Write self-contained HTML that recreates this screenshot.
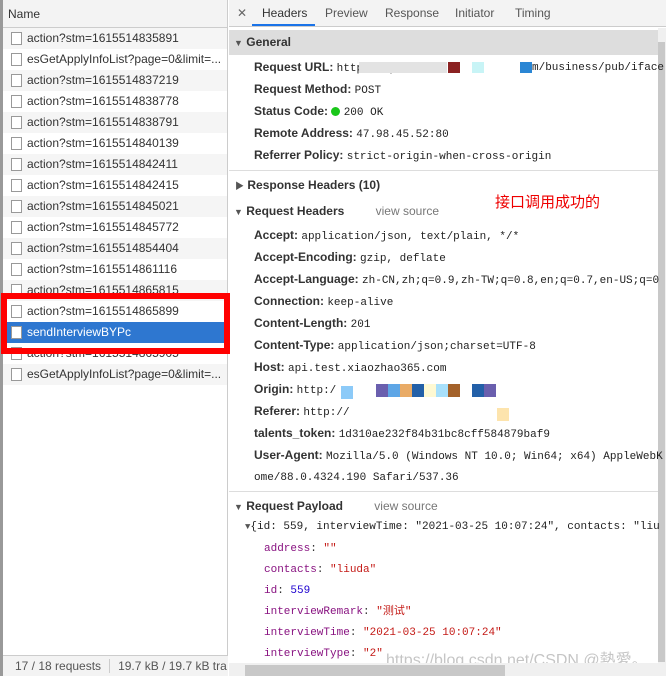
<!DOCTYPE html>
<html><head><meta charset="utf-8"><style>
*{box-sizing:border-box;margin:0;padding:0}
body{width:666px;height:676px;overflow:hidden;background:#fff;font-family:"Liberation Sans","Noto Sans CJK SC",sans-serif;font-size:12px;color:#333;position:relative}
.left{position:absolute;left:0;top:0;width:228px;height:676px;border-left:3px solid #999;border-right:1px solid #ccc;background:#fff}
.lh{height:28px;line-height:28px;padding-left:5px;border-bottom:1px solid #ccc;background:#f3f3f3;color:#333}
.row{height:21px;line-height:21px;position:relative;padding-left:24px;white-space:nowrap;overflow:hidden;color:#333}
.row:nth-child(even){background:#f5f5f5}
.row i{position:absolute;left:8px;top:4px;width:11px;height:13px;border:1px solid #999;background:#fff}
.row.sel{background:#2e77d0!important;color:#fff}
.foot{position:absolute;left:0;bottom:0;width:225px;height:21px;border-top:1px solid #ccc;background:#f3f3f3;line-height:21px;color:#555;white-space:nowrap;overflow:hidden}
.right{position:absolute;left:229px;top:0;width:437px;height:676px}
.tabs{height:27px;border-bottom:1px solid #ccc;background:#f3f3f3;position:relative;white-space:nowrap}
.tabs span{position:absolute;top:6px;color:#555}
.sec{position:absolute;left:0;width:429px;font-weight:bold;color:#333}
.k{position:absolute;left:25px;white-space:nowrap;font-weight:bold;color:#333}
.k b{font-weight:normal;font-family:"Liberation Mono",monospace;font-size:11px;color:#222}
.m{font-family:"Liberation Mono","Noto Sans CJK SC",monospace;font-size:11px;white-space:nowrap;position:absolute;line-height:14px;height:14px}
.p{color:#881280}.s{color:#c41a16}.n{color:#1c00cf}
.blk{position:absolute;height:11px}
.tri{font-size:9px;color:#555}
</style></head><body>
<div class="left">
<div class="lh">Name</div>
<div class="row"><i></i>action?stm=1615514835891</div>
<div class="row"><i></i>esGetApplyInfoList?page=0&amp;limit=...</div>
<div class="row"><i></i>action?stm=1615514837219</div>
<div class="row"><i></i>action?stm=1615514838778</div>
<div class="row"><i></i>action?stm=1615514838791</div>
<div class="row"><i></i>action?stm=1615514840139</div>
<div class="row"><i></i>action?stm=1615514842411</div>
<div class="row"><i></i>action?stm=1615514842415</div>
<div class="row"><i></i>action?stm=1615514845021</div>
<div class="row"><i></i>action?stm=1615514845772</div>
<div class="row"><i></i>action?stm=1615514854404</div>
<div class="row"><i></i>action?stm=1615514861116</div>
<div class="row"><i></i>action?stm=1615514865815</div>
<div class="row" style="background:#fff"><i></i>action?stm=1615514865899</div>
<div class="row sel"><i></i>sendInterviewBYPc</div>
<div class="row"><i></i>action?stm=1615514865905</div>
<div class="row"><i></i>esGetApplyInfoList?page=0&amp;limit=...</div>
<div class="foot"><span style="padding-left:12px">17 / 18 requests</span><span style="border-left:1px solid #ccc;margin-left:8px;padding-left:8px">19.7 kB / 19.7 kB tra</span></div>
</div>
<div style="position:absolute;left:1px;top:293px;width:229px;height:61px;border:6px solid #f00"></div>
<div class="right">
<div class="tabs">
<span style="left:8px;color:#666">✕</span>
<span style="left:33px;color:#333">Headers</span>
<div style="position:absolute;left:23px;top:24px;width:63px;height:2px;background:#1a73e8"></div>
<span style="left:96px">Preview</span><span style="left:156px">Response</span><span style="left:226px">Initiator</span><span style="left:286px">Timing</span>
</div>
<div style="position:absolute;left:429px;top:28px;width:8px;height:635px;background:#f0f0f0"><div style="margin-top:14px;height:620px;background:#c8c8c8;width:7px"></div></div>
<div class="sec" style="top:30px;height:25px;line-height:25px;background:#ddd;padding-left:5px"><span class="tri">▼</span> General</div>
<div class="k" style="top:60px">Request URL: <b>http://ap</b></div>
<div class="blk" style="left:130px;top:62px;width:88px;background:#e3e3e3"></div>
<div class="blk" style="left:219px;top:62px;width:12px;background:#8b2222"></div>
<div class="blk" style="left:243px;top:62px;width:12px;background:#c8f4f6"></div>
<div class="blk" style="left:291px;top:62px;width:12px;background:#2a86d4"></div>
<div class="m" style="left:303px;top:61px;color:#222">m/business/pub/iface</div>
<div class="k" style="top:82px">Request Method: <b>POST</b></div>
<div class="k" style="top:104px">Status Code: <span style="display:inline-block;width:9px;height:9px;border-radius:50%;background:#1ac71a;vertical-align:-1px"></span> <b>200 OK</b></div>
<div class="k" style="top:126px">Remote Address: <b>47.98.45.52:80</b></div>
<div class="k" style="top:148px">Referrer Policy: <b>strict-origin-when-cross-origin</b></div>
<div style="position:absolute;left:0;top:170px;width:429px;height:1px;background:#ddd"></div>
<div class="sec" style="top:178px;padding-left:6px"><span class="tri">▶</span> Response Headers (10)</div>
<div style="position:absolute;left:266px;top:191px;color:#e00;font-size:15px;font-family:'Noto Sans CJK SC',sans-serif">接口调用成功的</div>
<div class="sec" style="top:204px;padding-left:5px"><span class="tri">▼</span> Request Headers <span style="font-weight:normal;color:#777;margin-left:28px">view source</span></div>
<div class="k" style="top:228px">Accept: <b>application/json, text/plain, */*</b></div>
<div class="k" style="top:250px">Accept-Encoding: <b>gzip, deflate</b></div>
<div class="k" style="top:272px">Accept-Language: <b>zh-CN,zh;q=0.9,zh-TW;q=0.8,en;q=0.7,en-US;q=0</b></div>
<div class="k" style="top:294px">Connection: <b>keep-alive</b></div>
<div class="k" style="top:316px">Content-Length: <b>201</b></div>
<div class="k" style="top:338px">Content-Type: <b>application/json;charset=UTF-8</b></div>
<div class="k" style="top:360px">Host: <b>api.test.xiaozhao365.com</b></div>
<div class="k" style="top:382px">Origin: <b>http:/</b></div>
<div class="blk" style="left:112px;top:386px;width:12px;height:13px;background:#8ccaf8"></div>
<div class="blk" style="left:147px;top:384px;width:12px;height:13px;background:#6a5fae"></div>
<div class="blk" style="left:159px;top:384px;width:12px;height:13px;background:#5ea6e6"></div>
<div class="blk" style="left:171px;top:384px;width:12px;height:13px;background:#e9ab66"></div>
<div class="blk" style="left:183px;top:384px;width:12px;height:13px;background:#2360a8"></div>
<div class="blk" style="left:195px;top:384px;width:12px;height:13px;background:#fef9d3"></div>
<div class="blk" style="left:207px;top:384px;width:12px;height:13px;background:#a8e0fb"></div>
<div class="blk" style="left:219px;top:384px;width:12px;height:13px;background:#a4622a"></div>
<div class="blk" style="left:243px;top:384px;width:12px;height:13px;background:#2360a8"></div>
<div class="blk" style="left:255px;top:384px;width:12px;height:13px;background:#6a5fae"></div>
<div class="k" style="top:404px">Referer: <b>http://</b></div>
<div class="blk" style="left:268px;top:408px;width:12px;height:13px;background:#fde4ad"></div>
<div class="k" style="top:426px">talents_token: <b>1d310ae232f84b31bc8cff584879baf9</b></div>
<div class="k" style="top:448px">User-Agent: <b>Mozilla/5.0 (Windows NT 10.0; Win64; x64) AppleWebK</b></div>
<div class="k" style="top:469px"><b>ome/88.0.4324.190 Safari/537.36</b></div>
<div style="position:absolute;left:0;top:491px;width:429px;height:1px;background:#ddd"></div>
<div class="sec" style="top:499px;padding-left:5px"><span class="tri">▼</span> Request Payload <span style="font-weight:normal;color:#777;margin-left:28px">view source</span></div>
<div class="m" style="left:16px;top:520px;color:#222"><span class="tri">▼</span>{id: 559, interviewTime: "2021-03-25 10:07:24", contacts: "liu</div>
<div class="m" style="left:35px;top:542px"><span class="p">address</span>: <span class="s">""</span></div>
<div class="m" style="left:35px;top:563px"><span class="p">contacts</span>: <span class="s">"liuda"</span></div>
<div class="m" style="left:35px;top:584px"><span class="p">id</span>: <span class="n">559</span></div>
<div class="m" style="left:35px;top:605px"><span class="p">interviewRemark</span>: <span class="s">"测试"</span></div>
<div class="m" style="left:35px;top:626px"><span class="p">interviewTime</span>: <span class="s">"2021-03-25 10:07:24"</span></div>
<div class="m" style="left:35px;top:647px"><span class="p">interviewType</span>: <span class="s">"2"</span></div>
<div style="position:absolute;left:157px;top:646px;font-size:16px;color:rgba(150,150,150,.55);white-space:nowrap">https://blog.csdn.net/CSDN @熱愛。</div>
<div style="position:absolute;left:0;top:663px;width:437px;height:13px;background:#f0f0f0"><div style="position:absolute;left:16px;top:2px;width:260px;height:11px;background:#c8c8c8"></div></div>
</div>
</body></html>
